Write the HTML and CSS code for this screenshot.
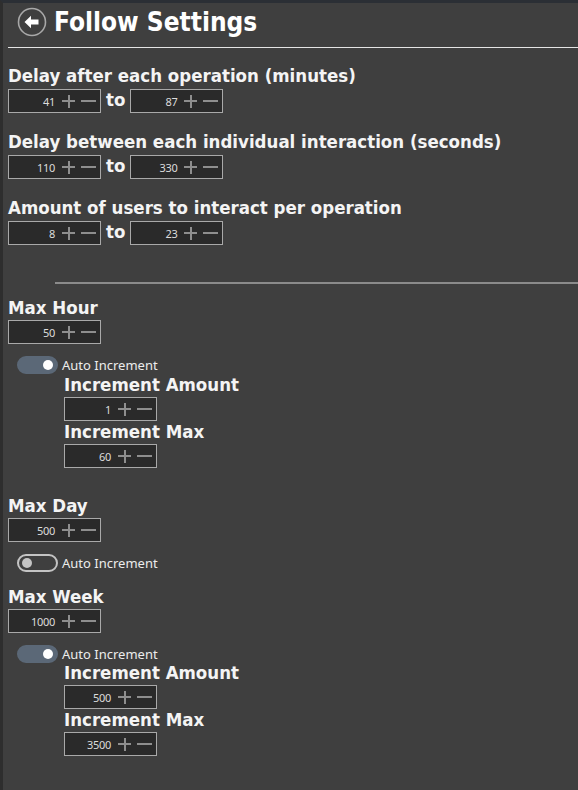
FILE: index.html
```html
<!DOCTYPE html>
<html lang="en">
<head>
<meta charset="utf-8">
<title>Follow Settings</title>
<link rel="stylesheet" href="styles.css">
</head>
<body>
<div class="frame">
  <header class="header">
    <svg class="back" width="30" height="30" viewBox="0 0 30 30" aria-hidden="true">
      <circle cx="15" cy="15" r="13.5" fill="none" stroke="#a8a8a8" stroke-width="1.6"/>
      <path d="M7.5 15 L14 8.8 L14 12.4 L21.5 12.4 L21.5 17.6 L14 17.6 L14 21.2 Z" fill="#ffffff"/>
    </svg>
    <h1 class="title">Follow Settings</h1>
  </header>

  <main class="content">
    <section class="group">
      <div class="label">Delay after each operation (minutes)</div>
      <div class="range">
        <div class="spin"><span class="val">41</span><span class="plus"></span><span class="minus"></span></div>
        <span class="to">to</span>
        <div class="spin"><span class="val">87</span><span class="plus"></span><span class="minus"></span></div>
      </div>
    </section>

    <section class="group">
      <div class="label">Delay between each individual interaction (seconds)</div>
      <div class="range">
        <div class="spin"><span class="val">110</span><span class="plus"></span><span class="minus"></span></div>
        <span class="to">to</span>
        <div class="spin"><span class="val">330</span><span class="plus"></span><span class="minus"></span></div>
      </div>
    </section>

    <section class="group last">
      <div class="label">Amount of users to interact per operation</div>
      <div class="range">
        <div class="spin"><span class="val">8</span><span class="plus"></span><span class="minus"></span></div>
        <span class="to">to</span>
        <div class="spin"><span class="val">23</span><span class="plus"></span><span class="minus"></span></div>
      </div>
    </section>

    <hr class="divider">

    <section class="limit">
      <div class="label">Max Hour</div>
      <div class="spin"><span class="val">50</span><span class="plus"></span><span class="minus"></span></div>
      <div class="toggle-row">
        <span class="toggle on"></span><span class="toggle-text">Auto Increment</span>
      </div>
      <div class="sub">
        <div class="label">Increment Amount</div>
        <div class="spin"><span class="val">1</span><span class="plus"></span><span class="minus"></span></div>
        <div class="label">Increment Max</div>
        <div class="spin"><span class="val">60</span><span class="plus"></span><span class="minus"></span></div>
      </div>
    </section>

    <section class="limit day">
      <div class="label">Max Day</div>
      <div class="spin"><span class="val">500</span><span class="plus"></span><span class="minus"></span></div>
      <div class="toggle-row">
        <span class="toggle"></span><span class="toggle-text">Auto Increment</span>
      </div>
    </section>

    <section class="limit week">
      <div class="label">Max Week</div>
      <div class="spin"><span class="val">1000</span><span class="plus"></span><span class="minus"></span></div>
      <div class="toggle-row">
        <span class="toggle on"></span><span class="toggle-text">Auto Increment</span>
      </div>
      <div class="sub">
        <div class="label">Increment Amount</div>
        <div class="spin"><span class="val">500</span><span class="plus"></span><span class="minus"></span></div>
        <div class="label">Increment Max</div>
        <div class="spin"><span class="val">3500</span><span class="plus"></span><span class="minus"></span></div>
      </div>
    </section>
  </main>
</div>
</body>
</html>
```

FILE: styles.css
```css
html, body {
  margin: 0;
  padding: 0;
  height: 100%;
}

body {
  background: #3f3f3f;
  font-family: "DejaVu Sans Condensed", "DejaVu Sans", Verdana, sans-serif;
  color: #f2f2f2;
  overflow: hidden;
}

.frame {
  min-height: 100%;
  box-sizing: border-box;
  border-top: 3px solid #2b2f35;
  border-left: 3px solid #2e2e2e;
}

/* ---------- header ---------- */
.header {
  display: flex;
  align-items: center;
  gap: 7px;
  height: 38px;
  padding: 0 0 6px 9px;
  margin-left: 5px;
  border-bottom: 1px solid #e4e4e4;
  margin-bottom: 18px;
}

.back {
  display: block;
  flex: none;
}

.title {
  margin: 0;
  font-size: 26px;
  font-weight: bold;
  line-height: 30px;
  color: #ffffff;
}

/* ---------- content ---------- */
.content {
  padding-left: 5px;
}

.label {
  font-size: 18.5px;
  font-weight: bold;
  line-height: 20px;
  color: #f4f4f4;
  white-space: nowrap;
}

.group {
  margin-bottom: 19px;
}

.group.last {
  margin-bottom: 0;
}

.group .label {
  margin-bottom: 3px;
}

.range {
  display: flex;
  align-items: center;
  gap: 5px;
}

.to {
  font-size: 18.5px;
  font-weight: bold;
  line-height: 20px;
  color: #f4f4f4;
  padding-bottom: 2px;
}

/* spin box: value, then plus and minus buttons */
.spin {
  box-sizing: border-box;
  width: 93px;
  height: 24px;
  border: 1px solid #a9a9a9;
  background: #2a2a2a;
  display: flex;
  align-items: center;
}

.val {
  width: 46px;
  text-align: right;
  font-family: "Noto Sans", "Open Sans", sans-serif;
  font-size: 11px;
  color: #dcdcdc;
  letter-spacing: -0.3px;
}

.plus,
.minus {
  position: relative;
  width: 13px;
  height: 13px;
  flex: none;
}

.plus {
  margin-left: 7px;
}

.minus {
  margin-left: 6px;
  width: 15px;
}

.plus::before,
.plus::after,
.minus::before {
  content: "";
  position: absolute;
  background: #8e8e8e;
}

.plus::before,
.minus::before {
  left: 0;
  right: 0;
  top: 5.5px;
  height: 2px;
}

.plus::after {
  top: 0;
  bottom: 0;
  left: 5.5px;
  width: 2px;
}

.divider {
  border: 0;
  height: 2px;
  background: #8b8b8b;
  margin: 37px 0 14px 47px;
}

/* ---------- limits ---------- */
.limit .label {
  margin-bottom: 2px;
}

.toggle-row {
  display: flex;
  align-items: center;
  gap: 4px;
  margin: 12px 0 1px 9px;
  height: 18px;
}

.toggle {
  position: relative;
  box-sizing: border-box;
  width: 41px;
  height: 18px;
  border-radius: 9px;
  border: 2px solid #c4c4c4;
  flex: none;
}

.toggle::after {
  content: "";
  position: absolute;
  top: 2px;
  left: 3px;
  width: 10px;
  height: 10px;
  border-radius: 50%;
  background: #c4c4c4;
}

.toggle.on {
  background: #5b6877;
  border-color: #5b6877;
}

.toggle.on::after {
  left: auto;
  right: 3px;
  background: #ffffff;
}

.toggle-text {
  font-family: "Noto Sans", "Open Sans", sans-serif;
  font-size: 13px;
  color: #ececec;
}

.sub {
  padding-left: 56px;
}

.sub .label {
  margin-bottom: 2px;
}

.sub .spin + .label {
  margin-top: 1px;
}

.day {
  margin-top: 28px;
}

.week {
  margin-top: 15px;
}

.week .sub .label:first-child {
  margin-top: -1px;
}
```
